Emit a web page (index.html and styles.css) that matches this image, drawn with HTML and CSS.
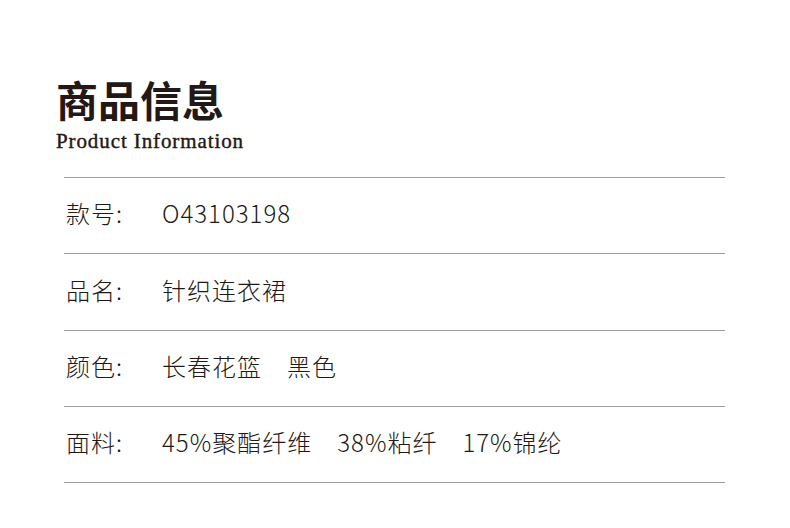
FILE: index.html
```html
<!DOCTYPE html>
<html lang="zh-CN">
<head>
<meta charset="utf-8">
<link rel="stylesheet" href="styles.css">
</head>
<body>
<div class="page">
  <header class="head">
    <h1 class="title">商品信息</h1>
    <p class="subtitle">Product Information</p>
  </header>
  <div class="table">
    <div class="row"><span class="label">款号:</span><span class="value">O43103198</span></div>
    <div class="row row-tall"><span class="label">品名:</span><span class="value">针织连衣裙</span></div>
    <div class="row"><span class="label">颜色:</span><span class="value">长春花篮　黑色</span></div>
    <div class="row"><span class="label">面料:</span><span class="value">45%聚酯纤维　38%粘纤　17%锦纶</span></div>
  </div>
</div>
</body>
</html>
```
FILE: styles.css
```css
html, body {
  margin: 0;
  padding: 0;
  background: #ffffff;
}
.page {
  width: 790px;
  height: 528px;
  box-sizing: border-box;
  padding: 74px 0 0 56px;
  color: #231815;
}
.head {
  margin: 0;
}
.title {
  margin: 0;
  font-family: "Noto Sans CJK SC", sans-serif;
  font-weight: 700;
  font-size: 42px;
  line-height: 50px;
  letter-spacing: 0;
}
.subtitle {
  margin: 5px 0 0 0;
  font-family: "Liberation Serif", serif;
  font-weight: 400;
  font-size: 21px;
  line-height: 24px;
  letter-spacing: 0.9px;
  -webkit-text-stroke: 0.4px #231815;
}
.table {
  margin: 24px 0 0 8px;
  width: 661px;
  border-top: 1px solid #9e9e9e;
}
.row {
  display: flex;
  align-items: center;
  height: 76px;
  box-sizing: border-box;
  padding: 0 0 6px 2px;
  border-bottom: 1px solid #9e9e9e;
  font-family: "Noto Sans CJK SC", sans-serif;
  font-weight: 300;
  font-size: 24px;
  color: #231815;
}
.row-tall {
  height: 77px;
}
.label {
  width: 96px;
  flex: none;
  letter-spacing: 1px;
}
.value {
  letter-spacing: 1px;
}
```
